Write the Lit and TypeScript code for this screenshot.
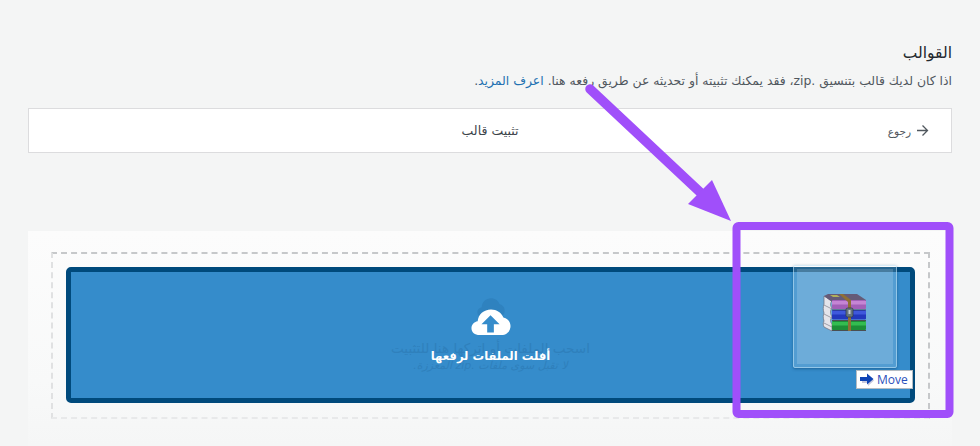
import { LitElement, html, css } from "lit";
import { customElement } from "lit/decorators.js";

@customElement("app-root")
export class AppRoot extends LitElement {
  static styles = css`
    :host { display: block; width: 980px; height: 446px; overflow: hidden; position: relative; background: #f4f5f5; font-family: "DejaVu Sans", "Noto Sans", sans-serif; color: #444; }
    .page { direction: rtl; padding: 42px 28px 0; box-sizing: border-box; height: 446px; display: flex; flex-direction: column; }
    h1 { margin: 0; font-size: 15.500px; line-height: 23px; font-weight: 400; color: #23282d; }
    .desc { margin: 7px 0 0; font-size: 12.400px; line-height: 18px; color: #50575e; }
    .desc a { color: #2271b1; text-decoration: none; }
    .bar { margin-top: 18px; height: 45px; box-sizing: border-box; background: #fff; border: 1px solid #dcdcde; display: grid; grid-template-columns: 1fr auto 1fr; align-items: center; padding: 0 22px; font-size: 12.500px; color: #50575e; }
    .back { display: flex; align-items: center; gap: 5px; font-size: 10.500px; }
    .back svg { display: block; }
    .title { color: #3c434a; }
    .panel { margin-top: 78px; flex: 1; padding: 21px 22px 27px 23px; background: linear-gradient(#fcfcfc, #f8f9f9 70%, #f5f6f6); display: flex; }
    .drop { flex: 1; padding: 13px 13px 14px 13px; border: 2px dashed #c6c8ca; border-bottom-color: #e8e9ea; border-left-color: #e0e1e2; display: flex; }
    .blue { flex: 1; box-sizing: border-box; border: 5px solid #004a7c; border-radius: 5px; background: #358ccb; display: flex; flex-direction: column; align-items: center; position: relative; color: #fff; }
    .cloud { margin-top: 37px; display: block; position: relative; }
    .cloud-back { position: absolute; top: 26px; left: 50%; margin-left: -15px; display: block; }
    .cta { margin-top: 10px; font-size: 11.600px; line-height: 20px; font-weight: 700; color: #fff; position: relative; }
    .faint { position: absolute; top: 67px; left: 0; right: 0; text-align: center; font-size: 13.600px; line-height: 18px; color: #2f80bc; }
    .faint i { display: block; font-size: 11px; }
    .ghost { position: absolute; left: 793px; top: 265px; width: 104px; height: 103px; box-sizing: border-box; border-radius: 2px; border: 4px solid rgba(255, 255, 255, 0.15); outline: 1px solid rgba(190, 225, 245, 0.6); outline-offset: -1px; background: rgba(255, 255, 255, 0.28); background-clip: padding-box; box-shadow: 0 1px 3px rgba(0, 50, 90, 0.45); display: flex; align-items: center; justify-content: center; }
    .ghost svg { display: block; margin-bottom: 7px; }
    .move { position: absolute; left: 856px; top: 370px; width: 57px; height: 19px; box-sizing: border-box; background: #fff; border: 1px solid #b5bcc2; display: flex; align-items: center; gap: 2px; padding-left: 3px; font: 12px "Open Sans", "Liberation Sans", Arial, sans-serif; color: #2a50bb; }
    .overlay { position: absolute; inset: 0; pointer-events: none; display: block; }
  `;

  render() {
    return html`
      <div class="page">
        <h1>القوالب</h1>
        <p class="desc">اذا كان لديك قالب بتنسيق .zip، فقد يمكنك تثبيته أو تحديثه عن طريق رفعه هنا. <a href="#">اعرف المزيد</a>.</p>
        <div class="bar">
          <span class="back">
            <svg width="13" height="13" viewBox="0 0 13 13" fill="none" stroke="#50575e" stroke-width="1.300"><path d="M1 6.500H11.500M6.500 1.500l5 5-5 5"/></svg>
            رجوع
          </span>
          <span class="title">تثبيت قالب</span>
          <span></span>
        </div>
        <div class="panel">
          <div class="drop">
            <div class="blue">
              <svg class="cloud-back" width="30" height="20" viewBox="0 0 42 30">
                <path fill="#2f82bf" d="M9 29C4 29 .5 26 .5 21.500c0-4 2.500-7 6.500-7.800C7.500 6 13.500 .5 21 .5c6 0 11 3.500 13 9 4.500.8 7.500 4.800 7.500 9.500 0 5.800-4 10-9.500 10z"/>
              </svg>
              <div class="faint">اسحب الملفات أو اتركها هنا للتثبيت<i>لا تقبل سوى ملفات .zip المعززة.</i></div>
              <svg class="cloud" width="40" height="27" viewBox="0 0 42 30" preserveAspectRatio="none">
                <path fill="#fff" d="M9 29C4 29 .5 26 .5 21.500c0-4 2.500-7 6.500-7.800C7.500 6 13.500 .5 21 .5c6 0 11 3.500 13 9 4.500.8 7.500 4.800 7.500 9.500 0 5.800-4 10-9.500 10z"/>
                <path fill="#358ccb" d="M20.500 7l9.500 10h-6v9h-7v-9h-6z"/>
              </svg>
              <div class="cta">أفلت الملفات لرفعها</div>
            </div>
          </div>
        </div>
      </div>

      <div class="ghost">
        <svg width="54" height="46" viewBox="0 0 54 46">
          <path fill="#e4e4ea" stroke="#6d6d78" stroke-width=".7" d="M6 6l8 5c-2 2-2 5 0 7-2 2-2 6 0 9-2 2-2 5 0 7v7l-8-4c-1-2-1-4 0-6-1-3-1-6 0-8-1-3-1-6 0-9z"/>
          <path fill="none" stroke="#8b8b96" stroke-width=".8" d="M6 15l8 4M6 24l8 4M6 33l8 4"/>
          <path fill="#655b78" d="M6 6 10 4H39L48 10V12H14z"/>
          <path fill="#b0b05a" d="M12 5h7l3 2h-7z"/>
          <rect x="14" y="10" width="34" height="9" rx="1" fill="#a25fb8"/>
          <rect x="14" y="11" width="34" height="3.500" fill="#c585d4"/>
          <rect x="14" y="20" width="34" height="9.500" rx="1" fill="#2338bd"/>
          <rect x="14" y="21" width="34" height="3.500" fill="#3f58dc"/>
          <rect x="14" y="31" width="34" height="9" rx="1" fill="#1d8f38"/>
          <rect x="14" y="32" width="34" height="3.500" fill="#33bd50"/>
          <path fill="#4a4f52" d="M14 19.500h34v.8H14zM14 30h34v1H14zM14 40h34v1H14z"/>
          <path fill="#8f7035" d="M21 4h4l8 6v31h-3V12z"/>
          <rect x="28" y="18" width="7" height="9" rx="1.500" fill="#66757f" stroke="#2e3a42" stroke-width=".7"/>
          <rect x="30.500" y="20" width="2" height="4" fill="#c5ccd0"/>
        </svg>
      </div>
      <div class="move">
        <svg width="15" height="13" viewBox="0 0 15 13"><path fill="#c7c9dd" d="M2 6h6V2l6 5.500-6 5.500V10H2z"/><path fill="#0f44b5" d="M0 4h7V.5l6.500 5.500L7 11.500V8H0z"/></svg>
        Move
      </div>

      <svg class="overlay" width="980" height="446" viewBox="0 0 980 446">
        <path d="M590 89L702 194" stroke="#a04ffa" stroke-width="9.500" fill="none" stroke-linecap="round"/>
        <path d="M731 221L688 204L712 180z" fill="#a04ffa"/>
        <rect x="736.500" y="226" width="213" height="188" fill="none" stroke="#a04ffa" stroke-width="8" rx="2"/>
      </svg>
    `;
  }
}
